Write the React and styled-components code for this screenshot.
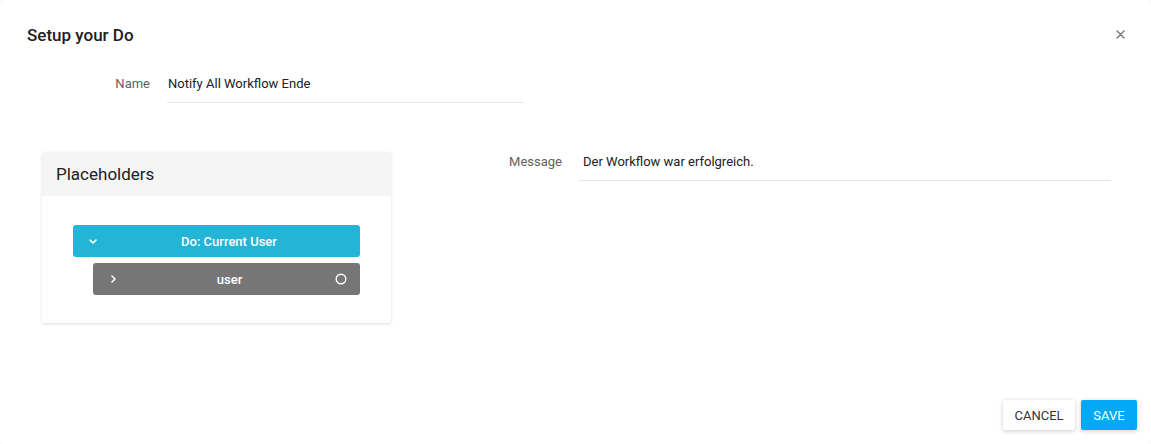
import React from 'react';
import styled, { createGlobalStyle } from 'styled-components';

const GlobalStyle = createGlobalStyle`
  html, body {
    margin: 0;
    padding: 0;
    background: #ffffff;
  }
  body {
    font-family: Roboto, "Liberation Sans", sans-serif;
    color: #212121;
  }
`;

const Dialog = styled.div`
  box-sizing: border-box;
  width: 1151px;
  height: 444px;
  display: flex;
  flex-direction: column;
  background: #ffffff;
  border-radius: 4px;
  box-shadow: 0 0 2px rgba(0, 0, 0, 0.12);
`;

const Header = styled.div`
  display: flex;
  align-items: center;
  justify-content: space-between;
  padding: 22px 24px 0 27px;
  height: 24px;
`;

const Title = styled.h2`
  margin: 0;
  font-size: 17px;
  font-weight: 500;
  line-height: 24px;
  color: #212121;
  transform: translateY(1px);
`;

const CloseButton = styled.button`
  border: none;
  background: none;
  padding: 0;
  width: 14px;
  height: 14px;
  display: flex;
  align-items: center;
  justify-content: center;
  cursor: pointer;
  color: #757575;
`;

const Content = styled.div`
  flex: 1;
  display: flex;
  flex-direction: column;
`;

const Field = styled.div`
  display: flex;
  align-items: flex-start;
  gap: 17px;
  margin-left: ${props => props.offset || 0}px;
  margin-top: ${props => props.top || 0}px;
`;

const Label = styled.label`
  width: ${props => props.width}px;
  text-align: right;
  font-size: 13px;
  line-height: 20px;
  padding-top: 7px;
  color: #616161;
`;

const Input = styled.div`
  box-sizing: border-box;
  width: ${props => props.width}px;
  padding: 7px 0 8px ${props => props.indent || 1}px;
  font-size: 13px;
  line-height: 20px;
  color: #212121;
  border-bottom: 1px solid #e6e6e6;
`;

const Lower = styled.div`
  display: flex;
  align-items: flex-start;
  margin-top: 40px;
  padding-left: 42px;
`;

const Card = styled.div`
  width: 349px;
  margin-top: 9px;
  background: #ffffff;
  border-radius: 2px;
  box-shadow: 0 1px 3px rgba(0, 0, 0, 0.14);
  overflow: hidden;
`;

const CardHeader = styled.div`
  height: 44px;
  display: flex;
  align-items: center;
  padding-left: 14px;
  background: #f5f5f5;
  font-size: 17px;
  color: #212121;
`;

const CardBody = styled.div`
  display: flex;
  flex-direction: column;
  gap: 6px;
  padding: 29px 31px 28px 31px;
`;

const Node = styled.div`
  height: 32px;
  margin-left: ${props => props.indent || 0}px;
  display: flex;
  align-items: center;
  border-radius: 3px;
  background: ${props => props.color};
  color: #ffffff;
  font-size: 13px;
  font-weight: 500;
`;

const NodeToggle = styled.span`
  width: 40px;
  display: flex;
  align-items: center;
  justify-content: center;
`;

const NodeLabel = styled.span`
  flex: 1;
  text-align: center;
  padding-left: ${props => props.padLeft || 0}px;
  padding-right: ${props => props.padRight || 0}px;
`;

const NodeAction = styled.span`
  width: 38px;
  display: flex;
  align-items: center;
  justify-content: center;
`;

const Actions = styled.div`
  display: flex;
  justify-content: flex-end;
  gap: 6px;
  padding: 0 14px 14px 0;
`;

const Button = styled.button`
  height: 30px;
  min-width: ${props => props.minWidth}px;
  padding: 0 10px;
  border: none;
  border-radius: 2px;
  font-family: Roboto, "Liberation Sans", sans-serif;
  font-size: 13px;
  text-transform: uppercase;
  cursor: pointer;
  background: ${props => (props.primary ? '#03a9f4' : '#ffffff')};
  color: ${props => (props.primary ? '#ffffff' : '#333333')};
  box-shadow: 0 1px 4px rgba(0, 0, 0, 0.2);
`;

function Chevron({ dir }) {
  const points = dir === 'down' ? '1,1 4,4 7,1' : '1,1 4,4 1,7';
  const size = dir === 'down' ? [8, 5] : [5, 8];
  return (
    <svg width={size[0]} height={size[1]} viewBox={`0 0 ${size[0]} ${size[1]}`}>
      <polyline points={points} fill="none" stroke="#ffffff" strokeWidth="1.6" strokeLinecap="round" strokeLinejoin="round" />
    </svg>
  );
}

export default function App() {
  return (
    <>
      <GlobalStyle />
      <Dialog>
        <Header>
          <Title>Setup your Do</Title>
          <CloseButton aria-label="close">
            <svg width="9" height="9" viewBox="0 0 9 9">
              <path d="M1 1 L8 8 M8 1 L1 8" stroke="currentColor" strokeWidth="1.4" strokeLinecap="round" />
            </svg>
          </CloseButton>
        </Header>
        <Content>
          <Field offset={0} top={21}>
            <Label width={150}>Name</Label>
            <Input width={357}>Notify All Workflow Ende</Input>
          </Field>
          <Lower>
            <Card>
              <CardHeader>Placeholders</CardHeader>
              <CardBody>
                <Node color="#24b4d6">
                  <NodeToggle><Chevron dir="down" /></NodeToggle>
                  <NodeLabel padRight={15}>Do: Current User</NodeLabel>
                </Node>
                <Node color="#767676" indent={20}>
                  <NodeToggle><Chevron dir="right" /></NodeToggle>
                  <NodeLabel padLeft={4}>user</NodeLabel>
                  <NodeAction>
                    <svg width="12" height="12" viewBox="0 0 12 12">
                      <circle cx="6" cy="6" r="4.8" fill="none" stroke="#ffffff" strokeWidth="1.4" />
                    </svg>
                  </NodeAction>
                </Node>
              </CardBody>
            </Card>
            <Field offset={91} top={2}>
              <Label width={80}>Message</Label>
              <Input width={532} indent={4}>Der Workflow war erfolgreich.</Input>
            </Field>
          </Lower>
        </Content>
        <Actions>
          <Button minWidth={72}>Cancel</Button>
          <Button primary minWidth={56}>Save</Button>
        </Actions>
      </Dialog>
    </>
  );
}
